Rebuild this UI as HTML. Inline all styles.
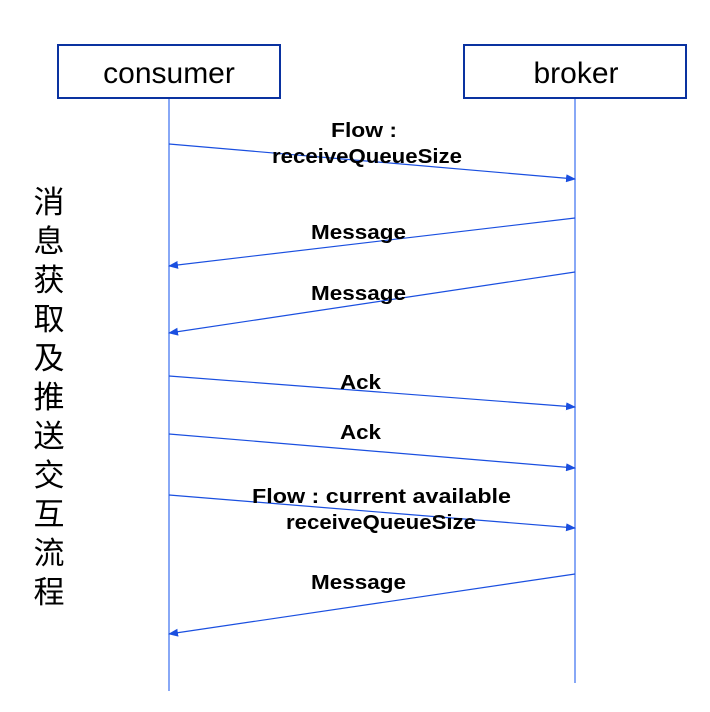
<!DOCTYPE html>
<html><head><meta charset="utf-8"><style>
html,body{margin:0;padding:0;background:#fff;width:710px;height:712px;overflow:hidden}
svg text{font-family:"Liberation Sans","Noto Sans CJK SC",sans-serif}
</style></head><body>
<svg width="710" height="712" viewBox="0 0 710 712" xmlns="http://www.w3.org/2000/svg">
<defs>
<marker id="a" markerWidth="10" markerHeight="8" refX="9" refY="4" orient="auto" markerUnits="userSpaceOnUse">
<path d="M0,0 L10,4 L0,8 Z" fill="#1a4fe0"/></marker>
</defs>
<rect x="58" y="45" width="222" height="53" fill="#fff" stroke="#0a32a0" stroke-width="2"/>
<rect x="464" y="45" width="222" height="53" fill="#fff" stroke="#0a32a0" stroke-width="2"/>
<text x="169" y="83" font-size="30" text-anchor="middle" fill="#000">consumer</text>
<text x="576" y="83" font-size="30" text-anchor="middle" fill="#000">broker</text>
<g stroke="#3a6ef0" stroke-width="1.2">
<line x1="169" y1="99" x2="169" y2="691"/>
<line x1="575" y1="99" x2="575" y2="683"/>
</g>
<g stroke="#1a4fe0" stroke-width="1.2" marker-end="url(#a)">
<line x1="169" y1="144" x2="575" y2="179"/>
<line x1="575" y1="218" x2="169" y2="266"/>
<line x1="575" y1="272" x2="169" y2="333"/>
<line x1="169" y1="376" x2="575" y2="407"/>
<line x1="169" y1="434" x2="575" y2="468"/>
<line x1="169" y1="495" x2="575" y2="528"/>
<line x1="575" y1="574" x2="169" y2="634"/>
</g>
<g font-size="20" font-weight="bold" fill="#000">
<text x="331" y="137" textLength="66" lengthAdjust="spacingAndGlyphs">Flow :</text>
<text x="272" y="163" textLength="190" lengthAdjust="spacingAndGlyphs">receiveQueueSize</text>
<text x="311" y="239" textLength="95" lengthAdjust="spacingAndGlyphs">Message</text>
<text x="311" y="300" textLength="95" lengthAdjust="spacingAndGlyphs">Message</text>
<text x="340" y="389" textLength="41" lengthAdjust="spacingAndGlyphs">Ack</text>
<text x="340" y="439" textLength="41" lengthAdjust="spacingAndGlyphs">Ack</text>
<text x="252" y="503" textLength="259" lengthAdjust="spacingAndGlyphs">Flow :  current available</text>
<text x="286" y="529" textLength="190" lengthAdjust="spacingAndGlyphs">receiveQueueSize</text>
<text x="311" y="589" textLength="95" lengthAdjust="spacingAndGlyphs">Message</text>
</g>
<g font-size="31" fill="#000" text-anchor="middle">
<text x="49" y="213">消</text>
<text x="49" y="252">息</text>
<text x="49" y="291">获</text>
<text x="49" y="330">取</text>
<text x="49" y="369">及</text>
<text x="49" y="408">推</text>
<text x="49" y="447">送</text>
<text x="49" y="486">交</text>
<text x="49" y="525">互</text>
<text x="49" y="564">流</text>
<text x="49" y="603">程</text>
</g>
</svg>
</body></html>
